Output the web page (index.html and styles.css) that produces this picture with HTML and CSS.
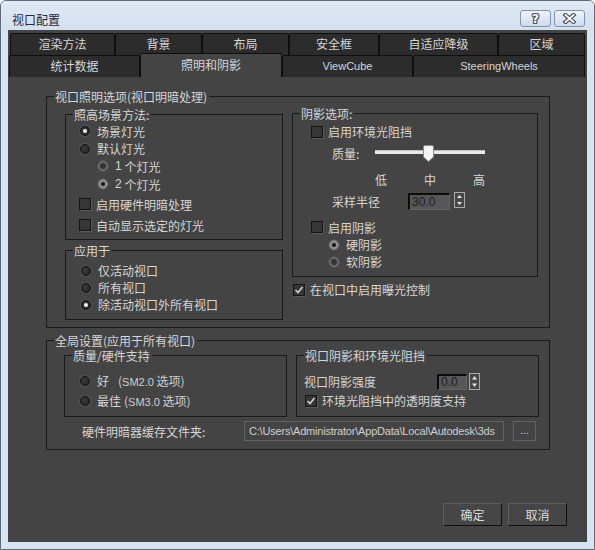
FILE: index.html
```html
<!DOCTYPE html>
<html lang="zh-CN">
<head>
<meta charset="utf-8">
<title>视口配置</title>
<link rel="stylesheet" href="styles.css">
</head>
<body>
<div class="window">
  <div class="titlebar">
    <span class="title">视口配置</span>
    <div class="caption-buttons">
      <span class="cap-btn help">?</span>
      <span class="cap-btn close"><svg width="15" height="11" viewBox="0 0 15 11"><path d="M3.5 2 L11.5 9 M11.5 2 L3.5 9" stroke="#4a5566" stroke-width="4.2" stroke-linecap="square"/><path d="M3.5 2 L11.5 9 M11.5 2 L3.5 9" stroke="#ffffff" stroke-width="1.8" stroke-linecap="square"/></svg></span>
    </div>
  </div>
  <div class="client">
    <div class="tab-row first">
      <div class="tab t-render">渲染方法</div>
      <div class="tab t-bg">背景</div>
      <div class="tab t-layout">布局</div>
      <div class="tab t-safe">安全框</div>
      <div class="tab t-adapt">自适应降级</div>
      <div class="tab t-region">区域</div>
    </div>
    <div class="tab-row second">
      <div class="tab t-stats">统计数据</div>
      <div class="tab t-light active">照明和阴影</div>
      <div class="tab t-cube latin">ViewCube</div>
      <div class="tab t-wheels latin">SteeringWheels</div>
    </div>

    <div class="panel">
      <div class="group g1">
        <span class="group-title">视口照明选项(视口明暗处理)</span>
        <div class="g1-body">
          <div class="col-left">
            <div class="group g-method">
              <span class="group-title">照高场景方法:</span>
              <div class="row h18 pl-radio"><span class="radio on"></span>场景灯光</div>
              <div class="row h17 pl-radio"><span class="radio"></span>默认灯光</div>
              <div class="row h18 pl-sub"><span class="radio dim"></span><span class="num">1</span>&nbsp;个灯光</div>
              <div class="row h18 pl-sub"><span class="radio dim on"></span><span class="num">2</span>&nbsp;个灯光</div>
              <div class="row h22 pl-check"><span class="cb"></span>启用硬件明暗处理</div>
              <div class="row h20 pl-check"><span class="cb"></span>自动显示选定的灯光</div>
            </div>
            <div class="group g-apply">
              <span class="group-title">应用于</span>
              <div class="apply-rows">
                <div class="row h17 pl-radio1"><span class="radio"></span>仅活动视口</div>
                <div class="row h17 pl-radio1"><span class="radio"></span>所有视口</div>
                <div class="row h17 pl-radio1"><span class="radio on"></span>除活动视口外所有视口</div>
              </div>
            </div>
          </div>
          <div class="col-right">
            <div class="group g-shadow">
              <span class="group-title">阴影选项:</span>
              <div class="row h21 pl-check2"><span class="cb"></span>启用环境光阻挡</div>
              <div class="row h22 pl-label">
                <span class="lbl-quality">质量:</span>
                <svg class="slider" width="110" height="20" viewBox="0 0 110 20">
                  <rect x="0" y="7" width="110" height="4" fill="#e9e9e9"/>
                  <rect x="0" y="7" width="110" height="1" fill="#bdbdbd"/>
                  <path d="M50 2.5 h7 a1.5 1.5 0 0 1 1.5 1.5 v10 l-5 4.5 l-5 -4.5 v-10 a1.5 1.5 0 0 1 1.5 -1.5 z" fill="#f4f4f4" stroke="#8c8c8c" stroke-width="1"/>
                </svg>
              </div>
              <div class="row h18 ticks"><span>低</span><span>中</span><span>高</span></div>
              <div class="row h18 pl-label radius-row">
                <span class="lbl-radius">采样半径</span>
                <span class="spin-input wide">30.0</span>
                <svg class="spinner" width="11" height="16" viewBox="0 0 11 16"><rect x="0.5" y="0.5" width="10" height="15" fill="#474747" stroke="#a9a9a9"/><path d="M5.5 3 L8 6 L3 6 Z M3 10 L8 10 L5.5 13 Z" fill="#e6e6e6"/></svg>
              </div>
              <div class="row h18 pl-check2 shadow-enable"><span class="cb"></span>启用阴影</div>
              <div class="row h17 pl-radio2"><span class="radio dim on"></span>硬阴影</div>
              <div class="row h17 pl-radio2"><span class="radio dim"></span>软阴影</div>
            </div>
            <div class="row h15 exposure"><span class="cb checked"><svg width="10" height="10" viewBox="0 0 10 10"><path d="M1.5 5 L4 7.5 L8.5 2" fill="none" stroke="#d2d2d2" stroke-width="1.6"/></svg></span>在视口中启用曝光控制</div>
          </div>
        </div>
      </div>

      <div class="group g2">
        <span class="group-title">全局设置(应用于所有视口)</span>
        <div class="g2-body">
          <div class="group g-quality">
            <span class="group-title">质量/硬件支持</span>
            <div class="quality-rows">
              <div class="row h19 pl-radio1"><span class="radio"></span>好<span class="sm gap2">(<span class="latin">SM2.0</span> 选项)</span></div>
              <div class="row h21 pl-radio1"><span class="radio"></span>最佳<span class="sm gap1">(<span class="latin">SM3.0</span> 选项)</span></div>
            </div>
          </div>
          <div class="group g-ao">
            <span class="group-title">视口阴影和环境光阻挡</span>
            <div class="ao-rows">
              <div class="row h19 pl-ao">
                <span class="lbl-strength">视口阴影强度</span>
                <span class="spin-input narrow">0.0</span>
                <svg class="spinner tall" width="11" height="17" viewBox="0 0 11 17"><rect x="0.5" y="0.5" width="10" height="16" fill="#474747" stroke="#a9a9a9"/><path d="M5.5 3 L8 6.5 L3 6.5 Z M3 10.5 L8 10.5 L5.5 14 Z" fill="#e6e6e6"/></svg>
              </div>
              <div class="row h19 pl-ao-check"><span class="cb checked"><svg width="10" height="10" viewBox="0 0 10 10"><path d="M1.5 5 L4 7.5 L8.5 2" fill="none" stroke="#d2d2d2" stroke-width="1.6"/></svg></span>环境光阻挡中的透明度支持</div>
            </div>
          </div>
        </div>
        <div class="path-row">
          <span class="lbl-path">硬件明暗器缓存文件夹:</span>
          <span class="path-input">C:\Users\Administrator\AppData\Local\Autodesk\3ds</span>
          <span class="browse">...</span>
        </div>
      </div>
    </div>

    <div class="dialog-buttons">
      <span class="btn">确定</span>
      <span class="btn">取消</span>
    </div>
  </div>
</div>
</body>
</html>
```

FILE: styles.css
```css
body {
  margin: 0;
  background: #ffffff;
}

.window {
  width: 595px;
  height: 550px;
  box-sizing: border-box;
  border: 1px solid #5f6a78;
  border-radius: 6px 6px 0 0;
  background: #d6e3f2;
  font-family: "Noto Sans CJK SC", sans-serif;
  font-size: 12px;
  color: #d6d6d6;
  overflow: hidden;
}

/* title bar */
.titlebar {
  height: 29px;
  box-sizing: border-box;
  display: flex;
  justify-content: space-between;
  align-items: flex-start;
  padding: 9px 9px 0 11px;
  background: linear-gradient(#e0e9f5, #d3e0ef);
}

.title {
  color: #1f2b3a;
  line-height: 16px;
  margin-top: 2px;
}

.caption-buttons {
  display: flex;
  gap: 3px;
}

.cap-btn {
  width: 31px;
  height: 17px;
  box-sizing: border-box;
  border: 1px solid #8393a8;
  border-radius: 3px;
  background: linear-gradient(#eef3fa, #cfdbea);
  display: flex;
  align-items: center;
  justify-content: center;
}

.help {
  font-family: "DejaVu Sans", sans-serif;
  font-weight: bold;
  font-size: 12px;
  line-height: 1;
  color: #ffffff;
  text-shadow: 1px 0 #4a5566, -1px 0 #4a5566, 0 1px #4a5566, 0 -1px #4a5566,
    1px 1px #4a5566, -1px -1px #4a5566, 1px -1px #4a5566, -1px 1px #4a5566;
}

/* client */
.client {
  margin: 0 7px;
  height: 512px;
  box-sizing: border-box;
  padding-top: 3px;
  background: #444444;
}

/* tabs */
.tab-row {
  display: flex;
  height: 22px;
}

.tab-row.first {
  margin-left: 2px;
}

.tab-row.second {
  margin-left: 1px;
}

.tab {
  flex: none;
  box-sizing: border-box;
  height: 22px;
  border: 1px solid #0f0f0f;
  border-bottom: none;
  border-radius: 2px 2px 0 0;
  background: #2c2c2c;
  text-align: center;
  line-height: 20px;
  color: #d6d6d6;
}

.tab.latin {
  font-family: "Liberation Sans", sans-serif;
  font-size: 11px;
}

.tab.active {
  background: #444444;
  height: 24px;
  margin-top: -2px;
  line-height: 22px;
  position: relative;
}

.t-render { width: 105px; }
.t-bg { width: 87px; }
.t-layout { width: 87px; }
.t-safe { width: 90px; }
.t-adapt { width: 119px; }
.t-region { width: 87px; }
.t-stats { width: 131px; }
.t-light { width: 142px; }
.t-cube { width: 131px; }
.t-wheels { width: 172px; }

/* panel and groups */
.panel {
  padding: 19px 0 0 38px;
}

.group {
  box-sizing: border-box;
  border: 1px solid #1a1a1a;
}

.group-title {
  display: block;
  width: max-content;
  height: 14px;
  margin: -7px 0 0 7px;
  padding: 0 2px 0 1px;
  line-height: 14px;
  background: #444444;
}

.g1 {
  width: 504px;
  height: 232px;
}

.g1-body {
  display: flex;
  align-items: flex-start;
  gap: 9px;
  margin: 9px 0 0 18px;
}

.col-left {
  margin-top: 1px;
  display: flex;
  flex-direction: column;
  gap: 10px;
}

.g-method {
  width: 218px;
  height: 126px;
}

.g-apply {
  width: 218px;
  height: 70px;
}

.apply-rows {
  padding-top: 4px;
}

.g-shadow {
  width: 246px;
  height: 164px;
}

/* rows */
.row {
  display: flex;
  align-items: center;
  white-space: nowrap;
}

.h15 { height: 15px; }
.h17 { height: 17px; }
.h18 { height: 18px; }
.h19 { height: 19px; }
.h20 { height: 20px; }
.h21 { height: 21px; }
.h22 { height: 22px; }

.pl-radio { padding-left: 14px; }
.pl-radio1 { padding-left: 15px; }
.pl-sub { padding-left: 32px; }
.pl-check { padding-left: 13px; }
.pl-check2 { padding-left: 18px; }
.pl-radio2 { padding-left: 36px; }
.pl-label { padding-left: 39px; }

.num {
  font-family: "Liberation Sans", sans-serif;
  font-size: 12px;
}

/* radio */
.radio {
  flex: none;
  position: relative;
  width: 10px;
  height: 10px;
  box-sizing: border-box;
  margin-right: 7px;
  border-radius: 50%;
  border: 1px solid #131313;
  background: radial-gradient(circle at 40% 40%, #3c3c3c, #1f1f1f);
  box-shadow: 0 0 0 1px #555555;
}

.radio.on::after {
  content: "";
  position: absolute;
  left: 2px;
  top: 2px;
  width: 4px;
  height: 4px;
  border-radius: 50%;
  background: #f2f2f2;
}

.radio.dim {
  border-color: #7d7d7d;
  background: radial-gradient(circle, #333333 35%, #6a6a6a 80%);
  box-shadow: 0 0 0 1px #4e4e4e;
}

.radio.dim.on {
  background: #8e8e8e;
}

.radio.dim.on::after {
  background: #151515;
}

/* checkbox */
.cb {
  flex: none;
  width: 12px;
  height: 12px;
  box-sizing: border-box;
  margin-right: 5px;
  border: 1px solid #141414;
  background: #363636;
  box-shadow: 1px 1px 0 #5a5a5a;
  display: flex;
  align-items: center;
  justify-content: center;
}

/* shadow options */
.lbl-quality {
  width: 43px;
}

.ticks {
  margin: 6px 0 0 82px;
  width: 110px;
  justify-content: space-between;
}

.radius-row {
  margin-top: 4px;
}

.lbl-radius {
  width: 76px;
}

.spin-input {
  box-sizing: border-box;
  border-style: solid;
  border-width: 2px 1px 1px 2px;
  border-color: #0c0c0c #646464 #646464 #0c0c0c;
  background: #575757;
  color: #1e1e1e;
  font-family: "Liberation Sans", sans-serif;
  font-size: 12px;
  padding-left: 2px;
}

.spin-input.wide {
  width: 42px;
  height: 17px;
  line-height: 14px;
}

.spin-input.narrow {
  width: 30px;
  height: 16px;
  line-height: 13px;
}

.spinner {
  flex: none;
  margin-left: 4px;
  margin-top: -2px;
}

.spinner.tall {
  margin-left: 2px;
  margin-top: 0;
}

.shadow-enable {
  margin-top: 8px;
}

.exposure {
  margin-top: 5px;
  padding-left: 1px;
}

/* global settings */
.g2 {
  width: 504px;
  height: 110px;
  margin-top: 12px;
}

.g2-body {
  display: flex;
  gap: 9px;
  margin: 7px 0 0 17px;
}

.g-quality {
  width: 223px;
  height: 62px;
}

.quality-rows {
  padding-top: 8px;
}

.sm {
  color: #cfcfcf;
}

.sm .latin {
  font-family: "Liberation Sans", sans-serif;
  font-size: 11px;
}

.gap2 {
  margin-left: 9px;
}

.gap1 {
  margin-left: 3px;
}

.g-ao {
  width: 243px;
  height: 62px;
}

.ao-rows {
  padding-top: 9px;
}

.pl-ao {
  padding-left: 7px;
}

.pl-ao-check {
  padding-left: 8px;
}

.lbl-strength {
  width: 133px;
}

.path-row {
  display: flex;
  align-items: center;
  height: 20px;
  margin: 4px 0 0 35px;
}

.lbl-path {
  width: 162px;
  flex: none;
}

.path-input {
  flex: none;
  width: 260px;
  height: 20px;
  box-sizing: border-box;
  border: 1px solid #626262;
  padding-left: 4px;
  overflow: hidden;
  white-space: nowrap;
  font-family: "Liberation Sans", sans-serif;
  font-size: 11px;
  letter-spacing: -0.2px;
  line-height: 18px;
  color: #d0d0d0;
}

.browse {
  flex: none;
  width: 23px;
  height: 20px;
  box-sizing: border-box;
  margin-left: 9px;
  border: 1px solid #626262;
  text-align: center;
  line-height: 16px;
  font-family: "Liberation Sans", sans-serif;
  font-size: 11px;
  color: #d0d0d0;
}

/* dialog buttons */
.dialog-buttons {
  display: flex;
  justify-content: flex-end;
  gap: 6px;
  margin-top: 53px;
  padding-right: 20px;
}

.btn {
  width: 59px;
  height: 23px;
  box-sizing: border-box;
  border: 1px solid;
  border-color: #5e5e5e #0e0e0e #0e0e0e #5e5e5e;
  background: #464646;
  display: flex;
  align-items: center;
  justify-content: center;
  color: #dcdcdc;
}
```
